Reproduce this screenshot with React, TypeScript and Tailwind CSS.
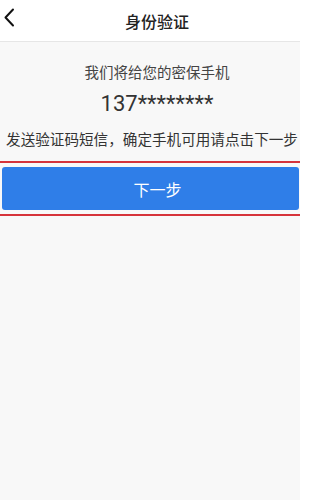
import React from 'react';

const App = () => {
  return (
    <div
      className="w-[300px] h-[500px] bg-[#f8f8f8] flex flex-col"
      style={{ fontFamily: '"Noto Sans CJK SC", "Noto Sans", sans-serif' }}
    >
      <header className="relative h-[42px] bg-white border-b border-[#e6e6e6] flex items-center justify-center">
        <button className="absolute left-[2px] top-[7px] w-[14px] h-[20px] flex items-center justify-center">
          <svg width="12" height="19" viewBox="0 0 12 19" fill="none">
            <path d="M10 1.5L2.5 9.5L10 17.5" stroke="#111" strokeWidth="2" strokeLinecap="round" strokeLinejoin="round" />
          </svg>
        </button>
        <h1 className="pl-[14px] text-[16px] font-medium text-[#222] leading-none">身份验证</h1>
      </header>

      <main className="flex flex-col">
        <p className="mt-[20px] pl-[14px] text-center text-[14.5px] leading-[20px] text-[#444]">
          我们将给您的密保手机
        </p>
        <p
          className="mt-[8px] pl-[14px] text-center text-[22px] leading-[28px] text-[#333]"
          style={{ fontFamily: 'Roboto, "Noto Sans", sans-serif' }}
        >
          137********
        </p>
        <p className="mt-[11px] text-center text-[14.6px] leading-[20px] text-[#333] whitespace-nowrap pl-[4px]">
          发送验证码短信，确定手机可用请点击下一步
        </p>

        <div className="mt-[12px] border-y-2 border-[#d6343b] py-[4px]">
          <button className="ml-[2px] mr-[1px] w-[297px] h-[43px] rounded-[3px] bg-[#2f7ee8] text-white text-[16px] flex items-center justify-center">
            <span className="pl-[14px]">下一步</span>
          </button>
        </div>
      </main>
    </div>
  );
};

export default App;
